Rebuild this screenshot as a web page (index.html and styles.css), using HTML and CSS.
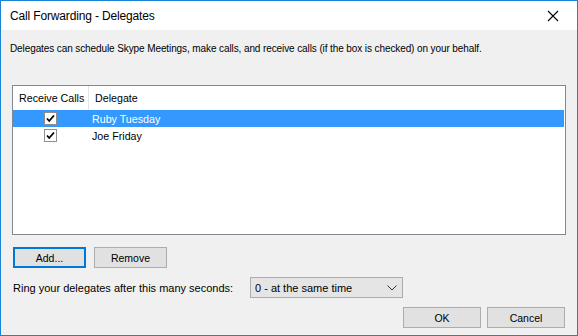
FILE: index.html
```html
<!DOCTYPE html>
<html lang="en">
<head>
    <meta charset="UTF-8">
    <title>Call Forwarding - Delegates</title>
    <link rel="stylesheet" href="styles.css">
</head>
<body>
    <div class="window">
        <div class="titlebar">
            <span class="title">Call Forwarding - Delegates</span>
            <span class="close">
                <svg width="12" height="12" viewBox="0 0 12 12"><path d="M1 1 L11 11 M11 1 L1 11" stroke="#000" stroke-width="1.1" fill="none"/></svg>
            </span>
        </div>

        <div class="content">
            <p class="intro">Delegates can schedule Skype Meetings, make calls, and receive calls (if the box is checked) on your behalf.</p>

            <div class="listbox">
                <div class="list-header">
                    <div class="col col-check">Receive Calls</div>
                    <div class="col col-name">Delegate</div>
                </div>
                <div class="row selected">
                    <div class="cell cell-check"><span class="checkbox"><svg width="11" height="11" viewBox="0 0 11 11"><path d="M2 5.5 L4.2 8 L9 2.5" stroke="#000" stroke-width="1.8" fill="none"/></svg></span></div>
                    <div class="cell cell-name">Ruby Tuesday</div>
                </div>
                <div class="row">
                    <div class="cell cell-check"><span class="checkbox"><svg width="11" height="11" viewBox="0 0 11 11"><path d="M2 5.5 L4.2 8 L9 2.5" stroke="#000" stroke-width="1.8" fill="none"/></svg></span></div>
                    <div class="cell cell-name">Joe Friday</div>
                </div>
            </div>

            <div class="list-actions">
                <button class="btn focused">Add...</button>
                <button class="btn">Remove</button>
            </div>

            <div class="ring">
                <span class="ring-label">Ring your delegates after this many seconds:</span>
                <div class="select">
                    <span>0 - at the same time</span>
                    <svg width="10" height="6" viewBox="0 0 10 6"><path d="M0.5 0.5 L5 5 L9.5 0.5" stroke="#333" stroke-width="1" fill="none"/></svg>
                </div>
            </div>

            <div class="dialog-actions">
                <button class="btn btn-wide">OK</button>
                <button class="btn btn-wide">Cancel</button>
            </div>
        </div>
    </div>
</body>
</html>
```

FILE: styles.css
```css
body {
    margin: 0;
    font-family: "Liberation Sans", Arial, sans-serif;
    font-size: 11px;
    color: #000;
    background: #fff;
}
.window {
    width: 578px;
    height: 336px;
    box-sizing: border-box;
    border: 1px solid #1883d7;
    background: #f0f0f0;
    display: flex;
    flex-direction: column;
}
.titlebar {
    height: 29px;
    background: #fff;
    display: flex;
    align-items: center;
    justify-content: space-between;
    padding: 0 18px 0 9px;
}
.title {
    font-size: 12px;
    letter-spacing: -0.15px;
}
.close {
    display: flex;
    margin-top: 1px;
}
.content {
    flex: 1;
    display: flex;
    flex-direction: column;
    padding: 0 11px 0 11px;
}
.intro {
    margin: 11px 0 0 -2px;
    height: 15px;
    line-height: 15px;
    font-size: 10px;
    letter-spacing: -0.1px;
}
.listbox {
    margin-top: 29px;
    height: 150px;
    box-sizing: border-box;
    border: 1px solid #828790;
    background: #fff;
    font-size: 10.7px;
}
.list-header {
    display: flex;
    height: 24px;
}
.col {
    display: flex;
    align-items: center;
    padding-left: 6px;
}
.col-check {
    width: 69px;
    border-right: 1px solid #e5e5e5;
}
.col-name {
    flex: 1;
    padding-left: 6px;
}
.row {
    display: flex;
    height: 17px;
    align-items: center;
}
.row.selected {
    background: #3399ff;
    color: #fff;
    margin-right: 1px;
}
.cell-check {
    width: 74px;
    display: flex;
    justify-content: center;
}
.cell-name {
    padding-left: 5px;
}
.checkbox {
    width: 13px;
    height: 13px;
    box-sizing: border-box;
    border: 1px solid #8f8f8f;
    background: #fff;
    display: flex;
    align-items: center;
    justify-content: center;
}
.list-actions {
    display: flex;
    gap: 8px;
    margin: 12px 0 0 1px;
}
.btn {
    width: 73px;
    height: 21px;
    box-sizing: border-box;
    border: 1px solid #adadad;
    background: #e1e1e1;
    font-family: inherit;
    font-size: 10.5px;
    color: #000;
    padding: 0;
}
.btn.focused {
    border: 2px solid #0078d7;
}
.btn-wide {
    width: 78px;
}
.ring {
    display: flex;
    align-items: center;
    margin-top: 9px;
    height: 21px;
}
.ring-label {
    width: 237px;
    margin-left: 1px;
}
.select {
    width: 153px;
    height: 21px;
    box-sizing: border-box;
    border: 1px solid #acacac;
    background: #e5e5e5;
    display: flex;
    align-items: center;
    justify-content: space-between;
    padding: 0 5px 0 4px;
}
.dialog-actions {
    display: flex;
    justify-content: flex-end;
    gap: 6px;
    margin-top: 9px;
    padding-right: 1px;
}
```
